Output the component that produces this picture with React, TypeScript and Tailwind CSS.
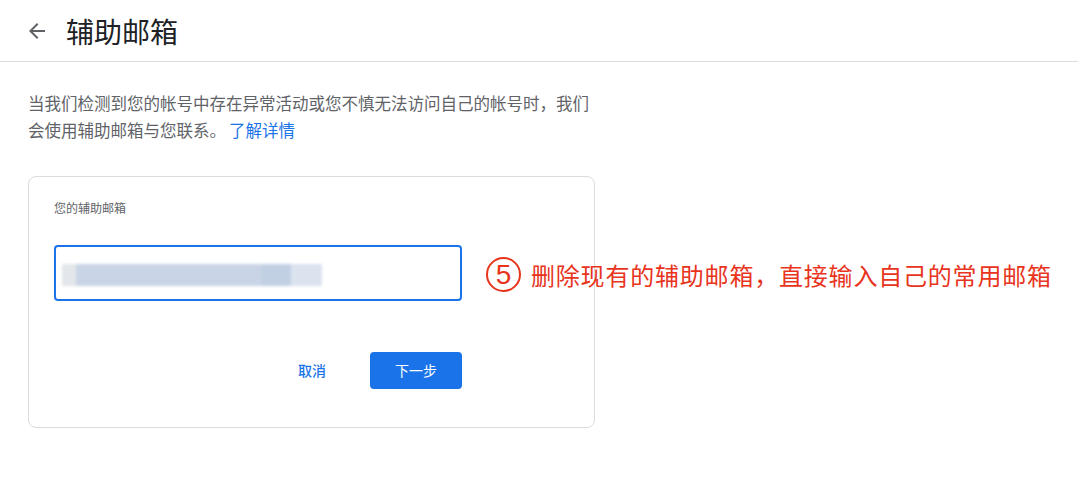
import React from "react";

const font = { fontFamily: '"Noto Sans CJK SC", "Noto Sans", sans-serif' };

export default function App() {
  return (
    <div className="relative w-[1078px] h-[486px] bg-white overflow-hidden text-[#202124]" style={font}>
      <header className="h-[62px] flex items-center border-b border-[#dadce0]">
        <button className="ml-[25px] w-[24px] h-[24px] flex items-center justify-center text-[#5f6368]">
          <svg width="24" height="24" viewBox="0 0 24 24" fill="currentColor">
            <path d="M20 11H7.83l5.59-5.59L12 4l-8 8 8 8 1.41-1.41L7.83 13H20v-2z" />
          </svg>
        </button>
        <h1 className="ml-[17px] text-[28px] leading-none font-normal text-[#202124] mt-[1px]">辅助邮箱</h1>
      </header>
      <main className="pl-[28px] pt-[28px]">
        <p className="w-[566px] text-[16.5px] leading-[27px] text-[#5f6368]">
          当我们检测到您的帐号中存在异常活动或您不慎无法访问自己的帐号时，我们会使用辅助邮箱与您联系。
          <span className="ml-[3px] text-[#1a73e8]">了解详情</span>
        </p>
        <section className="mt-[32px] w-[567px] h-[252px] border border-[#dadce0] rounded-[8px] pl-[25px] pt-[23px]">
          <div className="w-[408px]">
            <div className="text-[12px] leading-[16px] text-[#5f6368]">您的辅助邮箱</div>
            <div className="mt-[29px] h-[56px] border-2 border-[#1a73e8] rounded-[4px] relative overflow-hidden">
              <div className="absolute left-[6px] top-[17px] w-[260px] h-[22px] flex blur-[1.5px]">
                <div className="w-[14px] h-full bg-[#e3e6ea]" />
                <div className="w-[185px] h-full bg-[#c9d5e6]" />
                <div className="w-[30px] h-full bg-[#c2d0e4]" />
                <div className="w-[31px] h-full bg-[#dbe3ef]" />
              </div>
            </div>
            <div className="mt-[51px] flex justify-end items-center">
              <button className="px-[12px] h-[37px] text-[14px] text-[#1a73e8] font-medium">取消</button>
              <button className="ml-[32px] w-[92px] h-[37px] rounded-[4px] bg-[#1a73e8] text-white text-[14px]">下一步</button>
            </div>
          </div>
        </section>
      </main>
      <div className="absolute left-[486px] top-[257px] flex items-center text-[#e8341c]">
        <div className="w-[35px] h-[35px] rounded-full border-2 border-[#e8341c] flex items-center justify-center text-[28px] leading-none" style={{ fontFamily: '"Liberation Sans", sans-serif' }}>
          5
        </div>
        <span className="ml-[10px] text-[24px] leading-[35px] tracking-[0.8px]">删除现有的辅助邮箱，直接输入自己的常用邮箱</span>
      </div>
    </div>
  );
}
